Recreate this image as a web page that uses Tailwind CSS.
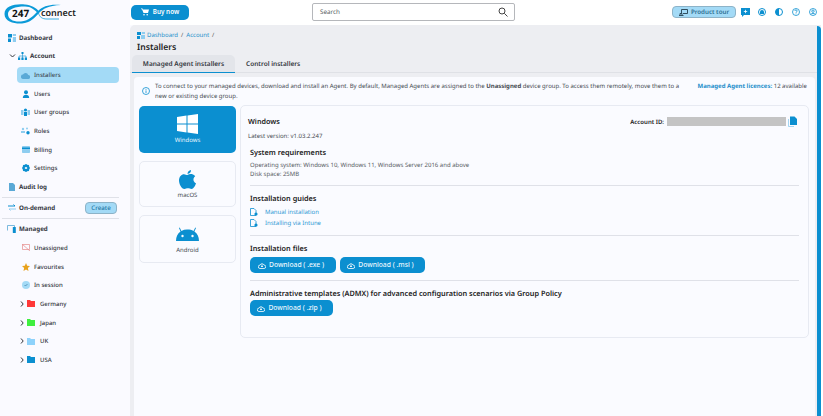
<!DOCTYPE html>
<html lang="en">
<head>
  <meta charset="UTF-8" />
  <title>Installers</title>
  <script src="https://cdn.jsdelivr.net/npm/@tailwindcss/browser@4"></script>
</head>
<body class="w-[823px] h-[416px] overflow-hidden bg-[#fafaff] flex font-['Noto_Sans',sans-serif] [text-rendering:geometricPrecision] text-[6px] leading-[10px] text-[#33363d]">
  <!-- Sidebar -->
  <aside class="w-[130px] h-full shrink-0 flex flex-col">
    <div class="h-[28.500px] shrink-0">
      <div class="relative w-[80px] h-[24px] ml-[3px] mt-[2px]">
        <svg class="absolute left-0 top-0" width="62" height="24" viewBox="0 0 62 24">
          <path fill="#0b9ad8" d="M22 2.500C12 1.500 1.500 4 1.500 12S12 22 19 21.500C27 21 32 15.500 36 11 40 7 45 3.500 58 3 47 2 40 4 35 9 31 13 26 19 18 19.500 10 20 5 17 5 12S12 4.500 22 4.500C28 4.500 32 8 34.500 11L36 9.500C33 5.500 28 3 22 2.500z"/>
          <path fill="none" stroke="#0b9ad8" stroke-width=".8" d="M35.500 11C36.500 15 39 17 44 17H56"/>
        </svg>
        <span class="absolute left-[9px] top-[3px] text-[10px] leading-[16px] font-bold text-[#111]">247</span>
        <span class="absolute left-[38px] top-[3px] text-[9px] leading-[16px] font-semibold text-[#222]">connect</span>
      </div>
    </div>
    <nav class="flex flex-col font-semibold">
      <a class="h-[18.670px] flex items-center pl-[8px] font-bold text-[6.200px]"><svg width="8" height="8" viewBox="0 0 8 8"><path fill="#0b8fd0" d="M0 0h4v3.500H0zM0 4.500h3V8H0z"/><path fill="#8ecdf0" d="M4.800 0H8v2H4.800zM4.800 3H8v5H4.800z"/></svg><span class="ml-[3px]">Dashboard</span></a>
      <a class="h-[18.670px] flex items-center pl-[9px] font-bold text-[6.200px]"><svg width="7" height="6" viewBox="0 0 7 6" fill="none" stroke="#33363d"><path d="M1 1.500 3.500 4 6 1.500"/></svg><svg class="ml-[2px]" width="9" height="8" viewBox="0 0 9 8"><path fill="#0b8fd0" d="M3.500 0h2v2h-2zM0 5.500h2.200V8H0zM3.400 5.500h2.200V8H3.400zM6.800 5.500H9V8H6.800z"/><path d="M1 6V4h7v2M4.500 2v4" stroke="#0b8fd0" stroke-width=".6" fill="none"/></svg><span class="ml-[3px]">Account</span></a>
      <a class="h-[16px] my-[1.330px] ml-[17px] mr-[11px] flex items-center pl-[4px] rounded-[4px] bg-[#a3daf6]"><svg width="9" height="7" viewBox="0 0 9 7"><path fill="#5aa9d6" d="M2.200 7A2.200 2.200 0 0 1 2 2.600 2.800 2.800 0 0 1 7.200 3 2 2 0 0 1 7 7z"/></svg><span class="ml-[4px] text-[#3f4a55] font-medium">Installers</span></a>
      <a class="h-[18.670px] flex items-center pl-[22px]"><svg width="8" height="8" viewBox="0 0 8 8"><circle cx="4" cy="2.200" r="2" fill="#0b8fd0"/><path fill="#0b8fd0" d="M.800 8c0-2.500 1.400-3.300 3.200-3.300S7.200 5.500 7.200 8z"/></svg><span class="ml-[4px] font-medium">Users</span></a>
      <a class="h-[18.670px] flex items-center pl-[21px]"><svg width="9" height="8" viewBox="0 0 9 8"><path fill="#8ecdf0" d="M0 2h2.500v5H0zM6.500 2H9v5H6.500z"/><circle cx="4.500" cy="2" r="1.600" fill="#0b8fd0"/><path fill="#0b8fd0" d="M3 4h3v4H3z"/></svg><span class="ml-[4px] font-medium">User groups</span></a>
      <a class="h-[18.670px] flex items-center pl-[21px]"><svg width="9" height="8" viewBox="0 0 9 8"><circle cx="2" cy="2" r="1.200" fill="#8ecdf0"/><circle cx="6" cy="1.500" r="1" fill="#8ecdf0"/><path fill="#8ecdf0" d="M0 4h4v2H0z"/><circle cx="7" cy="5.700" r="1.700" fill="#0b8fd0"/></svg><span class="ml-[4px] font-medium">Roles</span></a>
      <a class="h-[18.670px] flex items-center pl-[22px]"><svg width="8" height="7" viewBox="0 0 8 7"><rect width="8" height="7" rx=".8" fill="#8ecdf0"/><path fill="#0b8fd0" d="M0 1.500h8V3H0z"/></svg><span class="ml-[4px] font-medium">Billing</span></a>
      <a class="h-[18.670px] flex items-center pl-[22px]"><svg width="8" height="8" viewBox="0 0 8 8"><circle cx="4" cy="4" r="2.500" fill="none" stroke="#0b8fd0" stroke-width="2"/><path stroke="#0b8fd0" stroke-width="1.200" d="M4 0v8M0 4h8M1.200 1.200l5.600 5.600M6.800 1.200 1.200 6.800"/><circle cx="4" cy="4" r="1.100" fill="#fafaff"/></svg><span class="ml-[4px] font-medium">Settings</span></a>
      <a class="h-[18.670px] flex items-center pl-[9px] font-bold text-[6.200px]"><svg width="6" height="8" viewBox="0 0 6 8"><path fill="#5aa9d6" d="M0 0h4l2 2v6H0z"/></svg><span class="ml-[4px]">Audit log</span></a>
    </nav>
    <div class="h-[1px] mt-[0.500px] ml-[2px] mr-[11px] bg-[#dfe1e8]"></div>
    <div class="h-[20px] flex items-center pl-[8px] pr-[13px] font-bold text-[6.200px]">
      <svg width="8" height="7" viewBox="0 0 8 7" fill="none" stroke-width="1"><path d="M0 2h7M5.500.500 7 2" stroke="#0b8fd0"/><path d="M8 5H1M2.500 6.500 1 5" stroke="#8ecdf0"/></svg>
      <span class="ml-[3px] flex-1">On-demand</span>
      <span class="w-[32px] h-[12px] flex items-center justify-center rounded-[4px] bg-[#a3daf6] border border-[#8db3c8] text-[#1d76a6] font-medium">Create</span>
    </div>
    <div class="h-[1px] ml-[2px] mr-[11px] bg-[#dfe1e8]"></div>
    <nav class="flex flex-col font-medium pt-[1px]">
      <a class="h-[18.670px] flex items-center pl-[7px] font-bold text-[6.200px]"><svg width="9" height="8" viewBox="0 0 9 8" fill="none"><path d="M.500 5.500V.500h7v1.500" stroke="#5aa9d6" stroke-width=".8"/><rect x="5.800" y="2" width="3" height="6" rx=".5" fill="#0b8fd0"/></svg><span class="ml-[3px]">Managed</span></a>
      <a class="h-[18.670px] flex items-center pl-[22px]"><svg width="8" height="7" viewBox="0 0 8 7" fill="none" stroke="#e58a8a" stroke-width=".7"><path d="M.500.500h7v5h-7zM0 0l8 7"/></svg><span class="ml-[4px]">Unassigned</span></a>
      <a class="h-[18.670px] flex items-center pl-[22px]"><svg width="8" height="8" viewBox="0 0 8 8"><path fill="#e8a21c" d="M4 0l1.200 2.700L8 3l-2.100 2L6.500 8 4 6.500 1.500 8l.6-3L0 3l2.800-.3z"/></svg><span class="ml-[4px]">Favourites</span></a>
      <a class="h-[18.670px] flex items-center pl-[22px]"><svg width="8" height="8" viewBox="0 0 8 8" fill="none"><circle cx="4" cy="4" r="4" fill="#a3daf6"/><path d="M2.500 4l1 1L5.500 3" stroke="#3f7fa8" stroke-width=".7"/></svg><span class="ml-[4px]">In session</span></a>
      <a class="h-[18.670px] flex items-center pl-[20px]"><svg width="4" height="6" viewBox="0 0 4 6" fill="none" stroke="#33363d"><path d="M1 .500 3.200 3 1 5.500"/></svg><svg class="ml-[3px]" width="8" height="7" viewBox="0 0 8 7"><path fill="#ff3838" d="M0 0h3l1 1h4v6H0z"/></svg><span class="ml-[5px]">Germany</span></a>
      <a class="h-[18.670px] flex items-center pl-[20px]"><svg width="4" height="6" viewBox="0 0 4 6" fill="none" stroke="#33363d"><path d="M1 .500 3.200 3 1 5.500"/></svg><svg class="ml-[3px]" width="8" height="7" viewBox="0 0 8 7"><path fill="#3fef3f" d="M0 0h3l1 1h4v6H0z"/></svg><span class="ml-[5px]">Japan</span></a>
      <a class="h-[18.670px] flex items-center pl-[20px]"><svg width="4" height="6" viewBox="0 0 4 6" fill="none" stroke="#33363d"><path d="M1 .500 3.200 3 1 5.500"/></svg><svg class="ml-[3px]" width="8" height="7" viewBox="0 0 8 7"><path fill="#8ed2fb" d="M0 0h3l1 1h4v6H0z"/></svg><span class="ml-[5px]">UK</span></a>
      <a class="h-[18.670px] flex items-center pl-[20px]"><svg width="4" height="6" viewBox="0 0 4 6" fill="none" stroke="#33363d"><path d="M1 .500 3.200 3 1 5.500"/></svg><svg class="ml-[3px]" width="8" height="7" viewBox="0 0 8 7"><path fill="#0b8fd0" d="M0 0h3l1 1h4v6H0z"/></svg><span class="ml-[5px]">USA</span></a>
    </nav>
  </aside>

  <div class="flex-1 flex flex-col min-w-0">
    <!-- Header -->
    <header class="h-[25px] shrink-0 flex items-center relative bg-white">
      <button class="ml-[1px] w-[58px] h-[15px] rounded-[5px] bg-[#0b8fd0] text-white font-semibold text-[6.300px] flex items-center justify-center gap-[4px] -mt-[1px]">
        <svg width="8" height="8" viewBox="0 0 8 8" fill="#fff"><path d="M0 .500h1.500l.4 1H8L7 5H2.500L1 1.200H0z"/><circle cx="3" cy="6.800" r=".8"/><circle cx="6.200" cy="6.800" r=".8"/></svg>Buy now
      </button>
      <div class="ml-[123px] w-[203px] h-[18px] -mt-[1px] border border-[#b5b7bb] rounded-[2px] bg-white flex items-center pl-[7px] pr-[6px] justify-between text-[#5b5f66] text-[6.300px]">
        <span>Search</span>
        <svg width="10" height="10" viewBox="0 0 10 10" fill="none" stroke="#444" stroke-width="1"><circle cx="4" cy="4" r="3"/><path d="M6.300 6.300 9.500 9.500"/></svg>
      </div>
      <div class="ml-auto mr-[6px] flex items-center -mt-[1px]">
        <span class="w-[64px] h-[12px] rounded-[4px] bg-[#a3daf6] border border-[#8db3c8] flex items-center justify-center gap-[3px] text-[#2f6f93] font-semibold text-[6.200px]">
          <svg width="9" height="7" viewBox="0 0 9 7" fill="none" stroke="#24404f" stroke-width=".9"><path d="M2.500 4V.500h6v4H4M0 6.500h4.500M1 6V4.500h2V6"/></svg>Product tour</span>
        <svg class="ml-[5px]" width="9" height="9" viewBox="0 0 9 9"><path fill="#0b8fd0" d="M0 0h9v7H3L1 9V7H0z"/><path stroke="#fff" d="M4.500 1.800v3.400M2.800 3.500h3.400" stroke-width=".8"/></svg>
        <svg class="ml-[8px]" width="8" height="8" viewBox="0 0 8 8" fill="none"><circle cx="4" cy="4" r="3.500" stroke="#0b8fd0"/><path fill="#0b8fd0" d="M2 4a2 2 0 0 1 4 0v2H2z"/></svg>
        <svg class="ml-[9px]" width="8" height="8" viewBox="0 0 8 8" fill="none"><circle cx="4" cy="4" r="3.500" stroke="#0b8fd0"/><path fill="#0b8fd0" d="M4 .500a3.500 3.500 0 0 0 0 7z"/></svg>
        <svg class="ml-[9px]" width="8" height="8" viewBox="0 0 8 8" fill="none" stroke="#0b8fd0" stroke-width=".8"><circle cx="4" cy="4" r="3.500"/><path d="M2.800 3c0-1.500 2.400-1.500 2.400 0 0 .8-1.200.9-1.200 1.800M4 5.500v.7"/></svg>
        <svg class="ml-[9px]" width="8" height="8" viewBox="0 0 8 8" fill="none" stroke="#0b8fd0" stroke-width=".8"><circle cx="4" cy="4" r="3.500"/><circle cx="4" cy="3.200" r="1.200"/><path d="M1.800 6.300c1-1.200 3.400-1.200 4.400 0"/></svg>
      </div>
    </header>

    <!-- Main panel -->
    <main class="flex-1 min-h-0 rounded-tl-[5px] bg-[#edeef2] relative flex flex-col">
      <div class="absolute right-[2px] top-[1px] bottom-0 w-[4px] rounded-tr-[4px] bg-[#0b8fd0]"></div>
      <div class="absolute right-0 top-0 bottom-0 w-[2px] bg-white"></div>
      <div class="pl-[7px] pt-[5px] h-[30px] shrink-0">
        <div class="flex items-center text-[#1e8fcb] gap-[2px]"><svg width="8" height="7" viewBox="0 0 8 7"><path fill="#0b8fd0" d="M0 0h4v3H0zM0 4h3v3H0z"/><path fill="#8ecdf0" d="M4.800 0H8v2H4.800zM4 3h4v4H4z"/></svg>Dashboard <span class="text-[#555] mx-[1px]">/</span> Account <span class="text-[#555] mx-[1px]">/</span></div>
        <h1 class="text-[8.600px] leading-[13px] mt-[1px] font-semibold text-[#222]">Installers</h1>
      </div>
      <div class="h-[18px] shrink-0 flex items-start border-b border-[#dfe1e6] mr-[6px] font-semibold text-[6.500px] text-[#33363d]">
        <span class="ml-[2px] w-[103px] h-[18px] flex items-center justify-center rounded-t-[5px] bg-[#e3e5ea] border-b border-[#0b8fd0]">Managed Agent installers</span>
        <span class="ml-[11px] h-[17px] flex items-center">Control installers</span>
      </div>
      <div class="ml-[4px] mr-[8px] mt-[4px] flex-1 min-h-0 rounded-t-[4px] bg-[#fafbff] pl-[5px] pr-[6px]">
        <div class="h-[29px] flex items-start pt-[4px] text-[#444950]">
          <svg class="mt-[6px] ml-[3px]" width="8" height="8" viewBox="0 0 8 8" fill="none" stroke="#0b8fd0" stroke-width=".8"><circle cx="4" cy="4" r="3.500"/><path d="M4 3.400v2.600M4 2v.8"/></svg>
          <p class="ml-[5px] w-[527px] shrink-0">To connect to your managed devices, download and install an Agent. By default, Managed Agents are assigned to the <b class="font-bold">Unassigned</b> device group. To access them remotely, move them to a new or existing device group.</p>
          <p class="ml-auto mr-[2px] whitespace-nowrap"><b class="font-bold text-[#1e8fcb]">Managed Agent licences:</b> 12 available</p>
        </div>
        <div class="flex gap-[4px] items-start">
          <div class="w-[97px] shrink-0 flex flex-col gap-[8px]">
            <div class="h-[47px] rounded-[5px] bg-[#0b8fd0] text-[#e6f5fd] flex flex-col items-center pt-[8px]">
              <svg width="21" height="20" viewBox="0 0 21 20" fill="#fff"><path d="M0 3 9.500 1.600V9.500H0zM10.500 1.400 21 0v9.500H10.500zM0 10.500h9.500v8L0 17zM10.500 10.500H21V20l-10.500-1.500z"/></svg>
              <span class="mt-[1px]">Windows</span>
            </div>
            <div class="h-[46px] rounded-[5px] bg-[#fafbff] border border-[#e7eaf2] flex flex-col items-center pt-[8px]">
              <svg width="17" height="20" viewBox="0 0 17 20" fill="#0b8fd0"><path d="M8.500 5C10 4 12 3.800 14 4.500c1 .4 1.800 1 2.200 1.800-2.600 1.700-2.200 5.700.8 7-.8 2.500-2.500 5.700-4.500 5.700-1.300 0-2-.7-3.500-.7s-2.300.7-3.500.7C2.500 19 0 14 0 10.500 0 6.500 2.500 4.200 5 4.200c1.400 0 2.500.8 3.500.8z"/><path d="M8.500 4C8.500 2 10 .3 12 0c.2 2-1.400 3.800-3.500 4z"/></svg>
              <span class="text-[#444950]">macOS</span>
            </div>
            <div class="h-[48px] rounded-[5px] bg-[#fafbff] border border-[#e7eaf2] flex flex-col items-center pt-[9px]">
              <svg width="23" height="16" viewBox="0 0 23 16" fill="#0b8fd0"><path d="M0 16c0-4 1.500-7.500 4.500-9.500L3 3l.7-.4 1.700 3.300A12 12 0 0 1 11.500 4.500c2.200 0 4.300.5 6 1.400l1.800-3.300.7.4-1.600 3.500C21.500 8.500 23 12 23 16z"/><circle cx="6.500" cy="11" r="1.200" fill="#fafbff"/><circle cx="16.500" cy="11" r="1.200" fill="#fafbff"/></svg>
              <span class="mt-[4px] text-[#444950]">Android</span>
            </div>
          </div>
          <!-- Detail panel -->
          <section class="flex-1 h-[233px] -mt-[1px] rounded-[5px] border border-[#e7eaf2] bg-[#fafbff] pt-[10px] pl-[7px] pr-[9px]">
            <div class="flex items-start justify-between h-[15px]">
              <h2 class="text-[7.200px] leading-[11px] pt-[1px] font-semibold text-[#222]">Windows</h2>
              <div class="flex items-center gap-[2px] font-semibold text-[#222] pr-[2px]">Account ID:<span class="w-[119px] h-[9px] bg-[#c4c4c4] ml-[1px]"></span>
                <svg width="9" height="11" viewBox="0 0 9 11"><path fill="none" stroke="#8ecdf0" stroke-width=".8" d="M.500 3v7.500H6"/><path fill="#0b8fd0" d="M2 .500h4.500L9 3v6H2z"/></svg>
              </div>
            </div>
            <p class="text-[#444950]">Latest version: v1.03.2.247</p>
            <div class="ml-[2px] pt-[7px]">
              <h3 class="font-semibold text-[7.300px] leading-[11px] text-[#222]">System requirements</h3>
              <p class="text-[#555a61] leading-[10px] mt-[1px]">Operating system: Windows 10, Windows 11, Windows Server 2016 and above</p>
              <p class="text-[#555a61] leading-[10px] -mt-[1px]">Disk space: 25MB</p>
              <hr class="mt-[6px] border-[#dfe1e8]" />
              <h3 class="font-semibold text-[7.300px] leading-[11px] text-[#222] mt-[8px]">Installation guides</h3>
              <div class="flex items-center mt-[1px] h-[11px] text-[#2a97d3]"><svg width="8" height="8" viewBox="0 0 8 8" fill="none"><path d="M.500.500h3.500l2 2V7.500H.500z" stroke="#0b8fd0" stroke-width=".8"/><circle cx="6" cy="6" r="1.600" fill="#0b8fd0"/></svg><span class="ml-[7px]">Manual installation</span></div>
              <div class="flex items-center h-[11px] text-[#2a97d3]"><svg width="8" height="8" viewBox="0 0 8 8" fill="none"><path d="M.500.500h3.500l2 2V7.500H.500z" stroke="#0b8fd0" stroke-width=".8"/><circle cx="6" cy="6" r="1.600" fill="#0b8fd0"/></svg><span class="ml-[7px]">Installing via Intune</span></div>
              <hr class="mt-[7px] border-[#dfe1e8]" />
              <h3 class="font-semibold text-[7.300px] leading-[11px] text-[#222] mt-[8px]">Installation files</h3>
              <div class="flex gap-[4px] mt-[2px]">
                <button class="w-[86px] h-[16px] pr-[4px] rounded-[5px] bg-[#0b8fd0] text-[#eaf7fe] font-medium text-[6.750px] flex items-center justify-center gap-[3px]"><svg width="8" height="7" viewBox="0 0 8 7" fill="none" stroke="#fff" stroke-width=".8"><path d="M2 6.500a1.700 1.700 0 0 1 0-3.400A2.200 2.200 0 0 1 6 3a1.700 1.700 0 0 1 0 3.500zM4 2.500v2.500M3 4l1 1 1-1"/></svg>Download ( .exe )</button>
                <button class="w-[85px] h-[16px] pr-[4px] rounded-[5px] bg-[#0b8fd0] text-[#eaf7fe] font-medium text-[6.750px] flex items-center justify-center gap-[3px]"><svg width="8" height="7" viewBox="0 0 8 7" fill="none" stroke="#fff" stroke-width=".8"><path d="M2 6.500a1.700 1.700 0 0 1 0-3.400A2.200 2.200 0 0 1 6 3a1.700 1.700 0 0 1 0 3.500zM4 2.500v2.500M3 4l1 1 1-1"/></svg>Download ( .msi )</button>
              </div>
              <hr class="mt-[7px] border-[#dfe1e8]" />
              <h3 class="font-semibold text-[7.300px] leading-[11px] text-[#222] mt-[8px]">Administrative templates (ADMX) for advanced configuration scenarios via Group Policy</h3>
              <button class="w-[83px] h-[16px] pr-[4px] rounded-[5px] bg-[#0b8fd0] text-[#eaf7fe] font-medium text-[6.750px] flex items-center justify-center gap-[3px]"><svg width="8" height="7" viewBox="0 0 8 7" fill="none" stroke="#fff" stroke-width=".8"><path d="M2 6.500a1.700 1.700 0 0 1 0-3.400A2.200 2.200 0 0 1 6 3a1.700 1.700 0 0 1 0 3.500zM4 2.500v2.500M3 4l1 1 1-1"/></svg>Download ( .zip )</button>
            </div>
          </section>
        </div>
      </div>
    </main>
  </div>
</body>
</html>
